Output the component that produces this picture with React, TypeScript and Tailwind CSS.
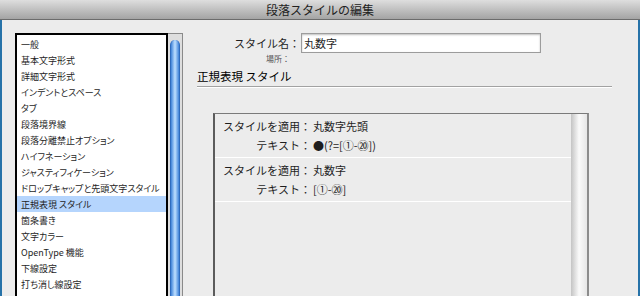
import React from 'react';

const categories = [
  '一般',
  '基本文字形式',
  '詳細文字形式',
  'インデントとスペース',
  'タブ',
  '段落境界線',
  '段落分離禁止オプション',
  'ハイフネーション',
  'ジャスティフィケーション',
  'ドロップキャップと先頭文字スタイル',
  '正規表現 スタイル',
  '箇条書き',
  '文字カラー',
  'OpenType 機能',
  '下線設定',
  '打ち消し線設定',
];

const rules = [
  { style: '丸数字先頭', text: '●(?=[①-⑳])' },
  { style: '丸数字', text: '[①-⑳]' },
];

const App: React.FC = () => {
  const selected = '正規表現 スタイル';

  return (
    <div
      className="w-[640px] h-[296px] overflow-hidden flex flex-col bg-[#ececec] text-[#1e1e1e]"
      style={{ fontFamily: '"Noto Sans CJK JP", "Noto Sans", sans-serif' }}
    >
      {/* title bar */}
      <div className="h-[20px] shrink-0 flex items-center justify-center bg-gradient-to-b from-[#dedede] to-[#a4a4a4] border-b border-[#6c6c6c]">
        <span className="text-[12px] leading-none text-[#222]">段落スタイルの編集</span>
      </div>

      <div className="flex-1 flex min-h-0 border-l-2 border-r-2 border-[#2672a8]">
        {/* category list */}
        <div className="ml-[13px] mt-[13px] flex">
          <div className="w-[153px] border-2 border-b-0 border-black bg-white pt-[1px] overflow-hidden">
            {categories.map((c) => (
              <div
                key={c}
                className={
                  'h-[16px] pl-[4px] flex items-center text-[9px] leading-none whitespace-nowrap [font-feature-settings:"palt"] ' +
                  (c === selected ? 'bg-[#b5d5fd]' : '')
                }
              >
                {c}
              </div>
            ))}
          </div>
          <div className="w-[15px] border-t border-r border-[#8a8a8a] bg-[#dedede] pt-[6px] px-[2px]">
            <div className="h-full rounded-t-full bg-gradient-to-r from-[#3f83d8] via-[#bfe0ff] to-[#3f83d8] border-x border-[#2f6cbf]" />
          </div>
        </div>

        {/* right side */}
        <div className="flex-1 flex flex-col min-w-0">
          <div className="flex items-center mt-[13px]">
            <div className="w-[117px] text-right text-[11px] leading-none">スタイル名：</div>
            <div className="ml-[1px] w-[240px] h-[20px] bg-white border border-[#9c9c9c] shadow-[inset_0_1px_2px_rgba(0,0,0,0.25)] flex items-center pl-[2px] text-[11px]">
              丸数字
            </div>
          </div>
          <div className="mt-[1px] flex">
            <div className="w-[107px] text-right text-[8px] leading-[10px] text-[#555]">場所：</div>
          </div>

          <div className="mt-[4px] ml-[14px] text-[11.5px] leading-[16px] text-black">正規表現 スタイル</div>
          <div className="mt-[2px] ml-[14px] mr-[26px] h-[2px] border-t border-[#a2a2a2] border-b border-b-white" />

          {/* rules panel */}
          <div className="mt-[25px] ml-[30px] w-[376px] flex-1 flex border-t border-[#7a7a7a] border-l-2 border-l-[#5c5c5c] border-r-2 border-r-[#8c8c8c]">
            <div className="flex-1">
              {rules.map((r) => (
                <div key={r.style} className="h-[44px] border-b border-white pt-[3px] pl-[8px] text-[11px] leading-[19px]">
                  <div className="flex">
                    <span className="w-[88px] text-right whitespace-nowrap">スタイルを適用：</span>
                    <span className="ml-[2px]">{r.style}</span>
                  </div>
                  <div className="flex">
                    <span className="w-[88px] text-right whitespace-nowrap">テキスト：</span>
                    <span className="ml-[2px]">{r.text}</span>
                  </div>
                </div>
              ))}
            </div>
            <div className="w-[16px] bg-gradient-to-r from-[#c4c4c4] via-[#fafafa] to-[#e6e6e6]" />
          </div>
        </div>
      </div>
    </div>
  );
};

export default App;
